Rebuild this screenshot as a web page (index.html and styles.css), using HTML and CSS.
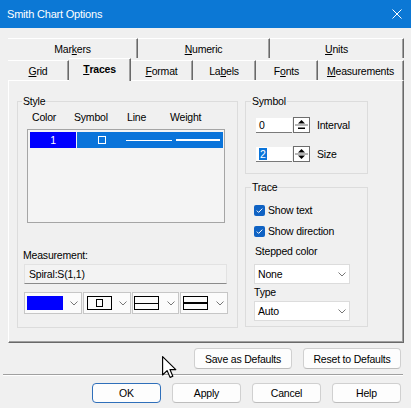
FILE: index.html
```html
<!DOCTYPE html>
<html lang="en">
<head>
    <meta charset="UTF-8">
    <title>Smith Chart Options</title>
    <link rel="stylesheet" href="styles.css">
</head>
<body>
    <div class="window">
        <div class="titlebar">
            <span class="title">Smith Chart Options</span>
            <svg class="close" width="10" height="10" viewBox="0 0 10 10">
                <path d="M0.5 0.5L9.5 9.5M9.5 0.5L0.5 9.5" stroke="#fff" stroke-width="1" fill="none"></path>
            </svg>
        </div>

        <div class="client">
            <!-- tab strip, two rows -->
            <div class="tab-row tab-row-back">
                <div class="tab tab-markers">Mar<u>k</u>ers</div>
                <div class="tab tab-numeric"><u>N</u>umeric</div>
                <div class="tab tab-units"><u>U</u>nits</div>
            </div>
            <div class="tab-row tab-row-front">
                <div class="tab tab-grid"><u>G</u>rid</div>
                <div class="tab tab-traces active"><u>T</u>races</div>
                <div class="tab tab-format"><u>F</u>ormat</div>
                <div class="tab tab-labels">La<u>b</u>els</div>
                <div class="tab tab-fonts">F<u>o</u>nts</div>
                <div class="tab tab-measurements"><u>M</u>easurements</div>
            </div>

            <div class="panel">
                <div class="group group-style">
                    <div class="caption">Style</div>
                    <div class="list-head">
                        <span class="head-color">Color</span>
                        <span class="head-symbol">Symbol</span>
                        <span class="head-line">Line</span>
                        <span>Weight</span>
                    </div>
                    <div class="trace-list">
                        <div class="trace-row">
                            <div class="trace-color">1</div>
                            <div class="trace-props">
                                <span class="sym-square"></span>
                                <span class="line-thin"></span>
                                <span class="line-thick"></span>
                            </div>
                        </div>
                    </div>
                    <div class="field-label">Measurement:</div>
                    <div class="readonly-box">Spiral:S(1,1)</div>
                    <div class="combo-row">
                        <div class="combo combo-color">
                            <span class="swatch"></span>
                            <svg class="chevron" width="8" height="5" viewBox="0 0 8 5"><path d="M0.5 0.5L4 4L7.5 0.5" stroke="#777" fill="none"></path></svg>
                        </div>
                        <div class="combo combo-symbol">
                            <span class="preview"><span class="preview-square"></span></span>
                            <svg class="chevron" width="8" height="5" viewBox="0 0 8 5"><path d="M0.5 0.5L4 4L7.5 0.5" stroke="#777" fill="none"></path></svg>
                        </div>
                        <div class="combo combo-line">
                            <span class="preview"><span class="preview-line"></span></span>
                            <svg class="chevron" width="8" height="5" viewBox="0 0 8 5"><path d="M0.5 0.5L4 4L7.5 0.5" stroke="#777" fill="none"></path></svg>
                        </div>
                        <div class="combo combo-weight">
                            <span class="preview"><span class="preview-line preview-thick"></span></span>
                            <svg class="chevron" width="8" height="5" viewBox="0 0 8 5"><path d="M0.5 0.5L4 4L7.5 0.5" stroke="#777" fill="none"></path></svg>
                        </div>
                    </div>
                </div>

                <div class="right-col">
                    <div class="group group-symbol">
                        <div class="caption">Symbol</div>
                        <div class="spin-row">
                            <div class="num-input">0</div>
                            <div class="spinner">
                                <svg width="15" height="14" viewBox="0 0 15 14">
                                    <path d="M4 5.5L7.5 2L11 5.5Z" fill="#000"></path>
                                    <line x1="1" y1="7" x2="14" y2="7" stroke="#6d6d6d"></line>
                                    <rect x="4" y="9.5" width="7" height="1.5" fill="#000"></rect>
                                </svg>
                            </div>
                            <span class="spin-label">Interval</span>
                        </div>
                        <div class="spin-row spin-row-second">
                            <div class="num-input"><span class="selected-text">2</span></div>
                            <div class="spinner">
                                <svg width="15" height="14" viewBox="0 0 15 14">
                                    <path d="M4 5.5L7.5 2L11 5.5Z" fill="#000"></path>
                                    <line x1="1" y1="7" x2="14" y2="7" stroke="#6d6d6d"></line>
                                    <path d="M4 8.5L11 8.5L7.5 12Z" fill="#000"></path>
                                </svg>
                            </div>
                            <span class="spin-label">Size</span>
                        </div>
                    </div>

                    <div class="group group-trace">
                        <div class="caption">Trace</div>
                        <div class="check-row">
                            <span class="checkbox">
                                <svg width="11" height="11" viewBox="0 0 11 11"><path d="M2.8 5.6L4.6 7.4L8.3 3.6" stroke="#fff" stroke-width="1" fill="none"></path></svg>
                            </span>
                            Show text
                        </div>
                        <div class="check-row check-row-second">
                            <span class="checkbox">
                                <svg width="11" height="11" viewBox="0 0 11 11"><path d="M2.8 5.6L4.6 7.4L8.3 3.6" stroke="#fff" stroke-width="1" fill="none"></path></svg>
                            </span>
                            Show direction
                        </div>
                        <div class="trace-label">Stepped color</div>
                        <div class="select">
                            <span>None</span>
                            <svg class="chevron" width="8" height="5" viewBox="0 0 8 5"><path d="M0.5 0.5L4 4L7.5 0.5" stroke="#777" fill="none"></path></svg>
                        </div>
                        <div class="trace-label trace-label-type">Type</div>
                        <div class="select select-type">
                            <span>Auto</span>
                            <svg class="chevron" width="8" height="5" viewBox="0 0 8 5"><path d="M0.5 0.5L4 4L7.5 0.5" stroke="#777" fill="none"></path></svg>
                        </div>
                    </div>
                </div>
            </div>

            <div class="defaults-row">
                <button class="btn btn-wide">Save as Defaults</button>
                <button class="btn btn-wide">Reset to Defaults</button>
            </div>
            <div class="separator"></div>
            <div class="action-row">
                <button class="btn btn-default">OK</button>
                <button class="btn">Apply</button>
                <button class="btn">Cancel</button>
                <button class="btn">Help</button>
            </div>
        </div>

        <!-- mouse pointer captured in the shot -->
        <svg class="cursor" width="15" height="23" viewBox="0 0 13 20">
            <path d="M0.5 0.5L0.5 16.5L4.4 12.7L7 18.6L9.4 17.6L6.9 11.8L12 11.8Z" fill="#fff" stroke="#000" stroke-width="1" stroke-linejoin="round"></path>
        </svg>
    </div>
</body>
</html>
```

FILE: styles.css
```css
:root {
    --face: #f0f0f0;
    --shadow: #a0a0a0;
    --dark-shadow: #696969;
    --highlight: #0a74da;
}

body {
    margin: 0;
    background: var(--face);
    font-family: "Liberation Sans", Arial, sans-serif;
    font-size: 10.5px;
    letter-spacing: -0.2px;
    color: #000;
}

.window {
    position: relative;
    width: 411px;
    height: 408px;
    background: var(--face);
    overflow: hidden;
}

.titlebar {
    height: 28px;
    box-sizing: border-box;
    background: #0c78d5;
    color: #fff;
    display: flex;
    align-items: center;
    justify-content: space-between;
    padding: 0 9px 0 7px;
}

.title {
    font-size: 11px;
}

.client {
    padding: 10px 7px 0 8px;
}

/* tabs */
.tab-row {
    display: flex;
}

.tab {
    box-sizing: border-box;
    display: flex;
    align-items: center;
    justify-content: center;
    border-top: 1px solid #fff;
    border-right: 1px solid var(--dark-shadow);
    box-shadow: inset -1px 0 var(--shadow);
}

.tab-row-back .tab {
    height: 20px;
}

.tab-markers { width: 130px; }
.tab-numeric { width: 132px; }
.tab-units { width: 134px; }

.tab-row-front {
    height: 22px;
    align-items: flex-end;
}

.tab-row-front .tab {
    height: 20px;
}

.tab-grid { width: 61px; }
.tab-traces { width: 62px; }
.tab-format { width: 62px; }
.tab-labels { width: 63px; }
.tab-fonts { width: 62px; }
.tab-measurements { width: 86px; }

.tab-row-front .tab.active {
    height: 23px;
    margin-bottom: -1px;
    padding-bottom: 2px;
    font-weight: bold;
    background: var(--face);
    position: relative;
    z-index: 1;
}

/* page body */
.panel {
    box-sizing: border-box;
    height: 263px;
    border-top: 1px solid #fff;
    border-left: 1px solid #fff;
    border-right: 1px solid var(--dark-shadow);
    border-bottom: 1px solid var(--dark-shadow);
    box-shadow: inset -1px -1px var(--shadow);
    padding: 20px 0 0 8px;
    display: flex;
    align-items: flex-start;
    gap: 7px;
}

.group {
    box-sizing: border-box;
    border: 1px solid #dcdcdc;
}

.caption {
    width: fit-content;
    margin-top: -7px;
    margin-left: 5px;
    padding: 0 1px;
    line-height: 13px;
    background: var(--face);
}

.group-style {
    width: 221px;
    height: 227px;
}

.group-style .caption {
    margin-left: 4px;
}

.list-head {
    display: flex;
    margin-top: 3px;
    padding-left: 14px;
    line-height: 13px;
}

.head-color { width: 42px; }
.head-symbol { width: 53px; }
.head-line { width: 43px; }

.trace-list {
    box-sizing: border-box;
    width: 198px;
    height: 94px;
    margin: 5px 0 0 9px;
    padding: 2px 1px 0 2px;
    border: 1px solid #a5a5a5;
    background: #f4f4f4;
}

.trace-row {
    display: flex;
    height: 16px;
}

.trace-color {
    width: 46px;
    background: #0000ff;
    color: #fff;
    text-align: center;
    line-height: 16px;
}

.trace-props {
    flex: 1;
    margin-left: 1px;
    background: var(--highlight);
    display: flex;
    align-items: center;
}

.sym-square {
    box-sizing: border-box;
    width: 8px;
    height: 8px;
    margin-left: 21px;
    border: 1.5px solid #fff;
}

.line-thin {
    width: 46px;
    height: 1px;
    margin-left: 20px;
    background: #fff;
}

.line-thick {
    width: 44px;
    height: 2px;
    margin-left: 4px;
    background: #fff;
}

.field-label {
    margin: 26px 0 0 5px;
    line-height: 13px;
}

.readonly-box {
    box-sizing: border-box;
    width: 203px;
    height: 20px;
    margin: 2px 0 0 6px;
    padding-left: 4px;
    line-height: 18px;
    border: 1px solid #e2e2e2;
    border-bottom-color: #8a8a8a;
    background: #f3f3f3;
}

.combo-row {
    display: flex;
    gap: 1px;
    margin: 8px 0 0 6px;
}

.combo {
    box-sizing: border-box;
    height: 22px;
    padding: 0 3px 0 2px;
    border: 1px solid #c6c6c6;
    background: #fbfbfb;
    display: flex;
    align-items: center;
    justify-content: space-between;
}

.combo-color { width: 58px; }
.combo-symbol { width: 48px; padding-left: 3px; }
.combo-line { width: 47px; padding-left: 1px; }
.combo-weight { width: 48px; }

.swatch {
    width: 36px;
    height: 14px;
    background: #0000ff;
}

.preview {
    box-sizing: border-box;
    width: 25px;
    height: 14px;
    border: 1px solid #000;
    display: flex;
    align-items: center;
    justify-content: center;
}

.preview-square {
    box-sizing: border-box;
    width: 7px;
    height: 8px;
    border: 1px solid #000;
}

.preview-line {
    width: 100%;
    height: 1px;
    background: #000;
}

.preview-thick {
    height: 2px;
}

.chevron {
    display: block;
}

/* right column */
.right-col {
    width: 123px;
    display: flex;
    flex-direction: column;
    gap: 13px;
}

.group-symbol {
    height: 73px;
}

.spin-row {
    display: flex;
    align-items: flex-end;
    height: 16px;
    margin: 9px 0 0 10px;
}

.spin-row-second {
    margin-top: 13px;
}

.num-input {
    box-sizing: border-box;
    width: 36px;
    height: 15px;
    padding-left: 3px;
    line-height: 14px;
    background: #fff;
    border-bottom: 1px solid #7a7a7a;
}

.selected-text {
    background: var(--highlight);
    color: #fff;
    padding: 0 1px;
}

.spinner {
    box-sizing: border-box;
    width: 17px;
    height: 16px;
    margin-left: 1px;
    border: 1px solid #6d6d6d;
    background: #fff;
}

.spinner svg {
    display: block;
}

.spin-label {
    margin-left: 7px;
    align-self: center;
}

.group-trace {
    height: 140px;
}

.check-row {
    display: flex;
    align-items: center;
    height: 16px;
    margin: 8px 0 0 8px;
}

.check-row-second {
    margin-top: 5px;
}

.checkbox {
    width: 11px;
    height: 11px;
    margin-right: 3px;
    border-radius: 2px;
    background: #0f62c3;
}

.checkbox svg {
    display: block;
}

.trace-label {
    margin: 6px 0 0 9px;
    line-height: 13px;
}

.trace-label-type {
    margin: 2px 0 0 8px;
}

.select {
    box-sizing: border-box;
    width: 96px;
    height: 20px;
    margin: 6px 0 0 8px;
    padding: 0 3px 0 3px;
    border: 1px solid #dcdcdc;
    background: #fff;
    display: flex;
    align-items: center;
    justify-content: space-between;
}

.select-type {
    margin-top: 2px;
}

/* buttons */
.btn {
    box-sizing: border-box;
    width: 69px;
    height: 20px;
    padding: 0;
    font: inherit;
    letter-spacing: inherit;
    color: #000;
    background: #fdfdfd;
    border: 1px solid #d0d0d0;
    border-bottom-color: #bdbdbd;
    border-radius: 4px;
}

.btn-wide {
    width: 98px;
    height: 21px;
}

.btn-default {
    border-color: #2f6fba;
}

.defaults-row {
    display: flex;
    justify-content: flex-end;
    gap: 11px;
    margin-top: 5px;
    padding-right: 3px;
}

.separator {
    width: 400px;
    height: 1px;
    margin: 5px 0 0 -5px;
    background: var(--shadow);
    border-bottom: 1px solid #fff;
}

.action-row {
    display: flex;
    justify-content: flex-end;
    gap: 11px;
    margin-top: 7px;
    padding-right: 3px;
}

.cursor {
    position: absolute;
    left: 162px;
    top: 356px;
}
```
